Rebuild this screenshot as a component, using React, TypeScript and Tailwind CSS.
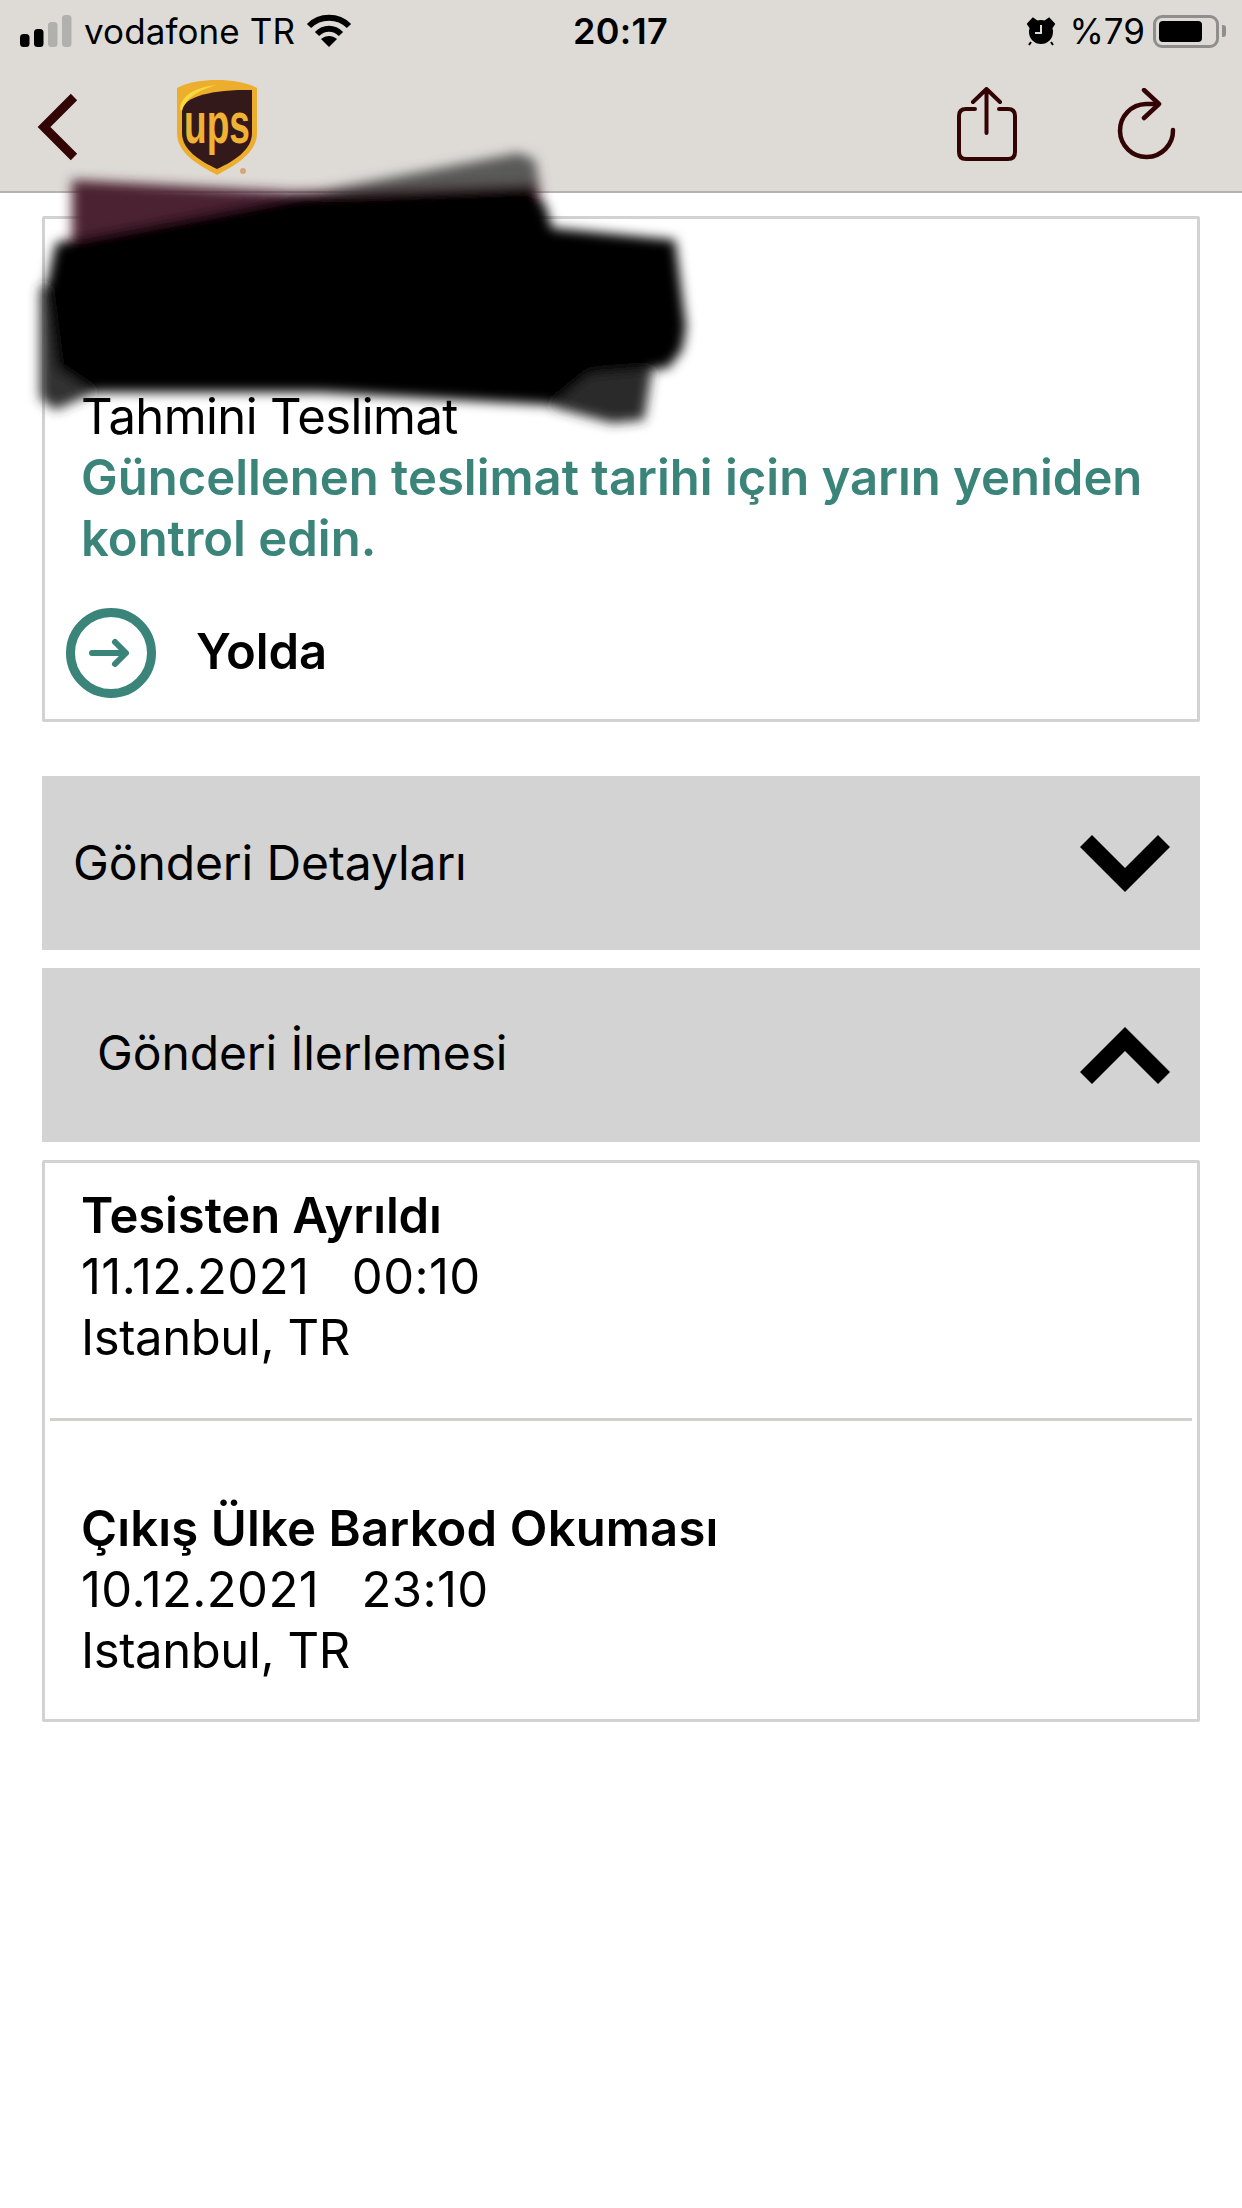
export default function App() {
  return (
    <div className="relative w-[1242px] h-[2208px] bg-white overflow-hidden text-black font-['Inter',sans-serif]">
      <header className="h-[193px] bg-[#dedbd7] border-b-2 border-[#b5b3b0]">
        <div className="relative h-[62px] flex items-center justify-between pl-[20px] pr-[16px]">
          <div className="flex items-center">
            <svg width="52" height="32" viewBox="0 0 52 32" className="shrink-0">
              <rect x="0" y="19" width="9.500" height="13" rx="3.500" fill="#000" />
              <rect x="14" y="14" width="9.500" height="18" rx="3.500" fill="#000" />
              <rect x="28" y="7" width="9.500" height="25" rx="3.500" fill="#b2b0ad" />
              <rect x="42" y="0" width="9.500" height="32" rx="3.500" fill="#b2b0ad" />
            </svg>
            <span className="ml-[12px] text-[35px] leading-none whitespace-nowrap tracking-[0.1px]">vodafone TR</span>
            <svg width="46" height="34" viewBox="0 0 46 34" className="ml-[11px] shrink-0" fill="none" stroke="#000" strokeWidth="6">
              <path d="M3 12 C14 1 32 1 43 12" />
              <path d="M11 20 C18 13 28 13 35 20" />
              <path d="M23 33 L15 25 C20 21 26 21 31 25 Z" fill="#000" stroke="none" />
            </svg>
          </div>
          <span className="text-[36px] leading-none font-semibold absolute left-[573px] tracking-[0.3px]">20:17</span>
          <div className="flex items-center">
            <svg width="30" height="30" viewBox="0 0 30 30" className="shrink-0">
              <circle cx="15" cy="16" r="12" fill="#000" />
              <path d="M2 8 L7 2.500 L10.500 5 L4 11 Z M28 8 L23 2.500 L19.500 5 L26 11 Z M5 26 L3 29 M25 26 L27 29" fill="#000" stroke="#000" strokeWidth="2" />
              <path d="M15 9 V17 H9" fill="none" stroke="#dedbd7" strokeWidth="2" />
            </svg>
            <span className="ml-[13px] text-[35px] leading-none">%79</span>
            <div className="ml-[8px] w-[66px] h-[33px] border-[3px] border-[#8f8e8c] rounded-[9px] p-[3px]">
              <div className="w-[43px] h-full bg-black rounded-[4px]" />
            </div>
            <div className="ml-[3px] w-[4px] h-[12px] bg-[#8f8e8c] rounded-r-[3px]" />
          </div>
        </div>
        <div className="h-[129px] flex items-center">
          <svg width="44" height="70" viewBox="0 0 44 70" className="ml-[36px] shrink-0" fill="none" stroke="#330404" strokeWidth="9">
            <path d="M38 5 L8 35 L38 65" />
          </svg>
          <svg width="84" height="100" viewBox="0 0 84 100" className="ml-[96px] mt-[4px] shrink-0 overflow-visible">
            <path d="M41 1 C56 1 70 3 81 9 V54 C81 74 60 86 41 96 C22 86 1 74 1 54 V9 C12 3 26 1 41 1 Z" fill="#eeae2d" />
            <path d="M6 32 C6 20 30 10 76 11 V54 C76 71 58 82 41 90 C24 82 6 71 6 54 Z" fill="#34191b" />
            <path d="M4 30 C5 16 20 8 41 6 C30 9 10 16 6 32 Z" fill="#f7da3d" />
            <text x="41" y="64" textAnchor="middle" textLength="66" lengthAdjust="spacingAndGlyphs" fontFamily="Liberation Sans" fontWeight="700" fontSize="58" fill="#efb233">ups</text>
            <circle cx="67" cy="92" r="3" fill="#d8a47a" />
          </svg>
          <div className="flex-1" />
          <svg width="60" height="76" viewBox="0 0 60 76" className="mr-[100px] mt-[-4px] shrink-0" fill="none" stroke="#330404" strokeWidth="4" strokeLinecap="round" strokeLinejoin="round">
            <path d="M18 22 H9 Q2 22 2 29 V65 Q2 72 9 72 H51 Q58 72 58 65 V29 Q58 22 51 22 H42" />
            <path d="M29.500 46 V3 M16 15 L29.500 2 L43 15" />
          </svg>
          <svg width="60" height="72" viewBox="0 0 60 72" className="mr-[65px] mt-[-6px] shrink-0" fill="none" stroke="#330404" strokeWidth="4.500" strokeLinecap="round" strokeLinejoin="round">
            <path d="M56 42 A26.500 26.500 0 1 1 29 16 H40" />
            <path d="M27 2 L42 16 L27 30" />
          </svg>
        </div>
      </header>

      <main className="px-[42px] pt-[23px]">
        <section className="border-[3px] border-[#d2d2d2] rounded-[2px] h-[506px] pt-[167px]">
          <div className="pl-[36px] text-[49px] leading-[61px] tracking-[-0.6px]">Tahmini Teslimat</div>
          <div className="pl-[36px] pr-[20px] text-[49px] leading-[61px] font-semibold text-[#3a8479] tracking-[0px]">
            Güncellenen teslimat tarihi için yarın yeniden kontrol edin.
          </div>
          <div className="flex items-center pl-[20px] mt-[34px]">
            <svg width="92" height="92" viewBox="0 0 92 92" className="mt-[4px] shrink-0" fill="none" stroke="#3a8479">
              <circle cx="46" cy="46" r="40.500" strokeWidth="9" />
              <path d="M27 46 H60 M50 35 L61 46 L50 57" strokeWidth="6" strokeLinecap="round" strokeLinejoin="round" />
            </svg>
            <span className="ml-[39px] text-[49px] leading-[61px] font-semibold tracking-[-0.1px]">Yolda</span>
          </div>
        </section>

        <div className="mt-[54px] h-[174px] bg-[#d3d3d3] flex items-center justify-between pl-[31px] pr-[30px]">
          <span className="text-[48px] tracking-[-0.1px]">Gönderi Detayları</span>
          <svg width="90" height="57" viewBox="0 0 90 57" className="shrink-0">
            <polygon points="12,0 0,12 45,57 90,12 78,0 45,33" fill="#000" />
          </svg>
        </div>
        <div className="mt-[18px] h-[174px] bg-[#d3d3d3] flex items-center justify-between pl-[55px] pr-[30px]">
          <span className="text-[48px] tracking-[-0.1px] mb-[4px]">Gönderi İlerlemesi</span>
          <svg width="90" height="57" viewBox="0 0 90 57" className="shrink-0">
            <polygon points="45,0 90,45 78,57 45,24 12,57 0,45" fill="#000" />
          </svg>
        </div>

        <section className="mt-[18px] border-[3px] border-[#d2d2d2] rounded-[2px] h-[562px] pt-[22px]">
          <div className="pl-[36px] text-[49px] leading-[61px]">
            <div className="font-semibold tracking-[-0.1px]">Tesisten Ayrıldı</div>
            <div className="whitespace-pre tracking-[0.4px]">11.12.2021   00:10</div>
            <div className="tracking-[-0.4px]">Istanbul, TR</div>
          </div>
          <div className="mx-[5px] mt-[50px] h-[3px] bg-[#d3cfca]" />
          <div className="pl-[36px] mt-[77px] text-[49px] leading-[61px]">
            <div className="font-semibold tracking-[0.15px]">Çıkış Ülke Barkod Okuması</div>
            <div className="whitespace-pre tracking-[0.4px]">10.12.2021   23:10</div>
            <div className="tracking-[-0.4px]">Istanbul, TR</div>
          </div>
        </section>
      </main>

      <svg width="760" height="480" viewBox="0 0 760 480" className="absolute left-0 top-0 pointer-events-none">
        <defs>
          <filter id="smear" x="-10%" y="-10%" width="120%" height="120%">
            <feGaussianBlur stdDeviation="6" />
          </filter>
        </defs>
        <g filter="url(#smear)">
          <polygon points="300,195 519,153 535,160 540,190 300,205" fill="#5a5a58" />
          <polygon points="72,180 294,192 537,184 545,215 72,245" fill="#4c2032" />
          <polygon points="40,287 100,280 100,390 55,410 40,398" fill="#333333" />
          <polygon points="560,370 652,370 644,420 612,423 552,407" fill="#2a2a2a" />
          <polygon points="56,243 298,196 530,186 546,207 552,228 675,240 686,327 682,350 668,368 590,374 552,405 320,392 92,392 56,368 46,290" fill="#000" />
        </g>
      </svg>
    </div>
  );
}
